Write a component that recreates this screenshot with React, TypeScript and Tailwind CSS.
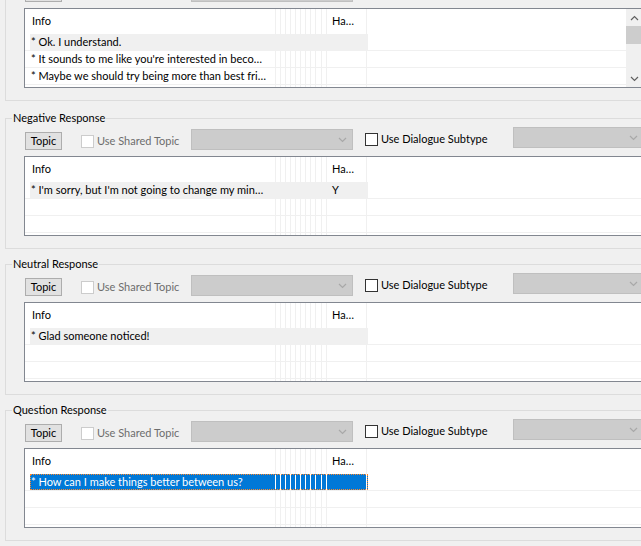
import React from 'react';

type Tone = 'plain' | 'gray' | 'blue';

type Row = { info: string; ha?: string; tone?: Tone };

type Group = { title: string; rows: Row[]; scroll?: boolean };

const groups: Group[] = [
    {
        title: 'Positive Response',
        scroll: true,
        rows: [
            { info: '* Ok. I understand.', tone: 'gray' },
            { info: '* It sounds to me like you\'re interested in beco\u2026' },
            { info: '* Maybe we should try being more than best fri\u2026' },
        ],
    },
    {
        title: 'Negative Response',
        rows: [{ info: '* I\'m sorry, but I\'m not going to change my min\u2026', ha: 'Y', tone: 'gray' }, { info: '' }, { info: '' }],
    },
    {
        title: 'Neutral Response',
        rows: [{ info: '* Glad someone noticed!', tone: 'gray' }, { info: '' }, { info: '' }],
    },
    {
        title: 'Question Response',
        rows: [{ info: '* How can I make things better between us?', tone: 'blue' }, { info: '' }, { info: '' }],
    },
];

// the ten squashed columns between "Info" and "Ha..."
const narrowCols = ['w-[5px]', 'w-[5px]', 'w-[5px]', 'w-[5px]', 'w-[5px]', 'w-[5px]', 'w-[5px]', 'w-[5px]', 'w-[6px]', 'w-[5px]'];

const Chevron = ({ up }: { up?: boolean }) => (
    <svg width="9" height="6" viewBox="0 0 9 6" fill="none" stroke="currentColor" strokeWidth={1.2}>
        {up ? <path d="M1 5l3.5-3.5L8 5" /> : <path d="M1 1l3.5 3.5L8 1" />}
    </svg>
);

const Cells = ({ info, ha, tone, header }: { info?: string; ha?: string; tone: Tone; header?: boolean }) => {
    const line = tone === 'blue' ? 'border-white' : 'border-[#f0f0f0]';
    const bg = tone === 'blue' ? 'bg-[#0078d7] text-white' : tone === 'gray' ? 'bg-[#f0f0f0]' : '';
    const pad = header ? 'pt-[4px]' : '';
    return (
        <div className={`flex h-full ${tone === 'blue' ? 'outline-1 outline-dotted outline-[#ff8728] -outline-offset-1' : ''}`}>
            <div className={`w-[246px] shrink-0 border-r ${line} ${bg} ${header ? 'pl-[2px]' : 'pl-[1px]'} ${pad} overflow-hidden whitespace-nowrap`}>{info}</div>
            {narrowCols.map((w, i) => (
                <div key={i} className={`${w} shrink-0 border-r ${line} ${bg}`} />
            ))}
            <div className={`w-[40px] shrink-0 border-r ${line} ${bg} pl-[5px] ${pad} overflow-hidden whitespace-nowrap`}>{ha}</div>
            <div className={`w-[1px] shrink-0 ${bg}`} />
        </div>
    );
};

const ListView = ({ rows, scroll }: { rows: Row[]; scroll?: boolean }) => (
    <div className="ml-[18px] mt-[5px] w-[620px] h-[80px] border border-[#828790] bg-white flex shrink-0">
        <div className="flex-1 flex flex-col min-w-0 leading-[16px]">
            <div className="h-[25px] flex shrink-0">
                <div className="w-[5px] shrink-0" />
                <Cells info="Info" ha={'Ha\u2026'} tone="plain" header />
            </div>
            {rows.map((r, i) => (
                <div key={i} className="h-[17px] flex shrink-0 border-b border-[#f0f0f0]">
                    <div className="w-[5px] shrink-0" />
                    <Cells info={r.info} ha={r.ha} tone={r.tone ?? 'plain'} />
                </div>
            ))}
            <div className="flex-1 flex">
                <div className="w-[5px] shrink-0" />
                <Cells tone="plain" />
            </div>
        </div>
        {scroll && (
            <div className="w-[17px] shrink-0 flex flex-col bg-[#f0f0f0] text-[#606060]">
                <div className="h-[17px] flex items-center justify-center">
                    <Chevron up />
                </div>
                <div className="h-[18px] bg-[#cdcdcd]" />
                <div className="flex-1" />
                <div className="h-[17px] flex items-center justify-center">
                    <Chevron />
                </div>
            </div>
        )}
    </div>
);

const Combo = ({ className }: { className: string }) => (
    <div className={`h-[21px] shrink-0 border border-[#bfbfbf] bg-[#cccccc] flex items-center justify-end pr-[5px] text-[#a8a8a8] ${className}`}>
        <Chevron />
    </div>
);

const ResponseGroup = ({ group, className }: { group: Group; className: string }) => (
    <div className={`relative w-[650px] h-[131px] ml-[5px] border border-[#dcdcdc] shrink-0 ${className}`}>
        <span className="absolute left-[6px] top-[-9px] px-[1px] bg-[#f0f0f0] leading-[16px] whitespace-nowrap">{group.title}</span>
        <div className="flex items-start h-[32px]">
            <div className="ml-[19px] mt-[13px] w-[37px] h-[18px] shrink-0 border border-[#adadad] bg-[#e1e1e1] flex items-center justify-center leading-[14px]">
                Topic
            </div>
            <div className="ml-[19px] mt-[15px] w-[110px] shrink-0 flex items-center">
                <div className="w-[13px] h-[13px] shrink-0 border border-[#cccccc] bg-white" />
                <span className="ml-[3px] leading-[14px] text-[#6d6d6d] whitespace-nowrap">Use Shared Topic</span>
            </div>
            <Combo className="mt-[10px] w-[162px]" />
            <div className="ml-[12px] mt-[13px] w-[148px] shrink-0 flex items-center">
                <div className="w-[13px] h-[13px] shrink-0 border border-[#333333] bg-white" />
                <span className="ml-[3px] leading-[14px] whitespace-nowrap">Use Dialogue Subtype</span>
            </div>
            <Combo className="mt-[8px] w-[131px]" />
        </div>
        <ListView rows={group.rows} scroll={group.scroll} />
    </div>
);

export default function App() {
    return (
        <div className="w-[641px] h-[546px] overflow-hidden bg-[#f0f0f0] text-black text-[11px] font-['Lato',sans-serif] flex flex-col">
            <ResponseGroup group={groups[0]} className="mt-[-30px]" />
            <ResponseGroup group={groups[1]} className="mt-[17px]" />
            <ResponseGroup group={groups[2]} className="mt-[15px]" />
            <ResponseGroup group={groups[3]} className="mt-[15px]" />
        </div>
    );
}
